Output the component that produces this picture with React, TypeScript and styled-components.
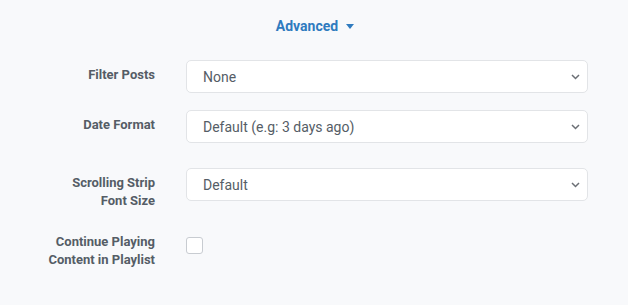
import React from "react";
import styled, { createGlobalStyle } from "styled-components";

const GlobalStyle = createGlobalStyle`
  html, body {
    margin: 0;
    padding: 0;
    background: #f8f9fb;
    font-family: Roboto, "Liberation Sans", sans-serif;
  }
`;

const Page = styled.div`
  width: 628px;
  height: 305px;
  box-sizing: border-box;
  padding-top: 16px;
  background: #f8f9fb;
`;

const Toggle = styled.div`
  display: flex;
  align-items: center;
  justify-content: center;
  gap: 8px;
  height: 20px;
  margin-left: 2px;
  color: #2f7bbf;
  font-size: 14px;
  font-weight: 700;
  cursor: pointer;
`;

const Caret = styled.span`
  width: 0;
  height: 0;
  border-left: 4.5px solid transparent;
  border-right: 4.5px solid transparent;
  border-top: 5px solid #2f7bbf;
  margin-top: 1px;
`;

const Form = styled.div`
  margin-top: 24px;
  display: flex;
  flex-direction: column;
`;

const Row = styled.div<{ gapAfter?: number }>`
  display: grid;
  grid-template-columns: 155px 402px;
  column-gap: 31px;
  align-items: start;
  margin-bottom: ${({ gapAfter }) => gapAfter ?? 17}px;
`;

const Label = styled.label`
  padding-top: 6px;
  text-align: right;
  font-size: 13px;
  font-weight: 700;
  line-height: 18px;
  color: #555d66;
`;

const SelectBox = styled.div`
  position: relative;
  height: 33px;
  box-sizing: border-box;
  border: 1px solid #e2e4e7;
  border-radius: 5px;
  background: #ffffff;
  display: flex;
  align-items: center;
  padding-left: 16px;
  font-size: 14px;
  color: #555d66;
`;

const Chevron = styled.svg`
  position: absolute;
  right: 7px;
  top: 50%;
  margin-top: -3px;
`;

const Checkbox = styled.span`
  display: block;
  margin-top: 10px;
  width: 17px;
  height: 17px;
  box-sizing: border-box;
  border: 1px solid #c8ccd1;
  border-radius: 3px;
  background: #ffffff;
`;

function Select({ value }: { value: string }) {
  return (
    <SelectBox>
      {value}
      <Chevron width="9" height="6" viewBox="0 0 9 6">
        <path d="M1 1l3.5 3.5L8 1" fill="none" stroke="#6b6f75" strokeWidth="1.5" />
      </Chevron>
    </SelectBox>
  );
}

export default function App() {
  return (
    <Page>
      <GlobalStyle />
      <Toggle>
        Advanced
        <Caret />
      </Toggle>
      <Form>
        <Row>
          <Label>Filter Posts</Label>
          <Select value="None" />
        </Row>
        <Row gapAfter={25}>
          <Label>Date Format</Label>
          <Select value="Default (e.g: 3 days ago)" />
        </Row>
        <Row>
          <Label>
            Scrolling Strip
            <br />
            Font Size
          </Label>
          <Select value="Default" />
        </Row>
        <Row>
          <Label>
            Continue Playing
            <br />
            Content in Playlist
          </Label>
          <Checkbox />
        </Row>
      </Form>
    </Page>
  );
}
